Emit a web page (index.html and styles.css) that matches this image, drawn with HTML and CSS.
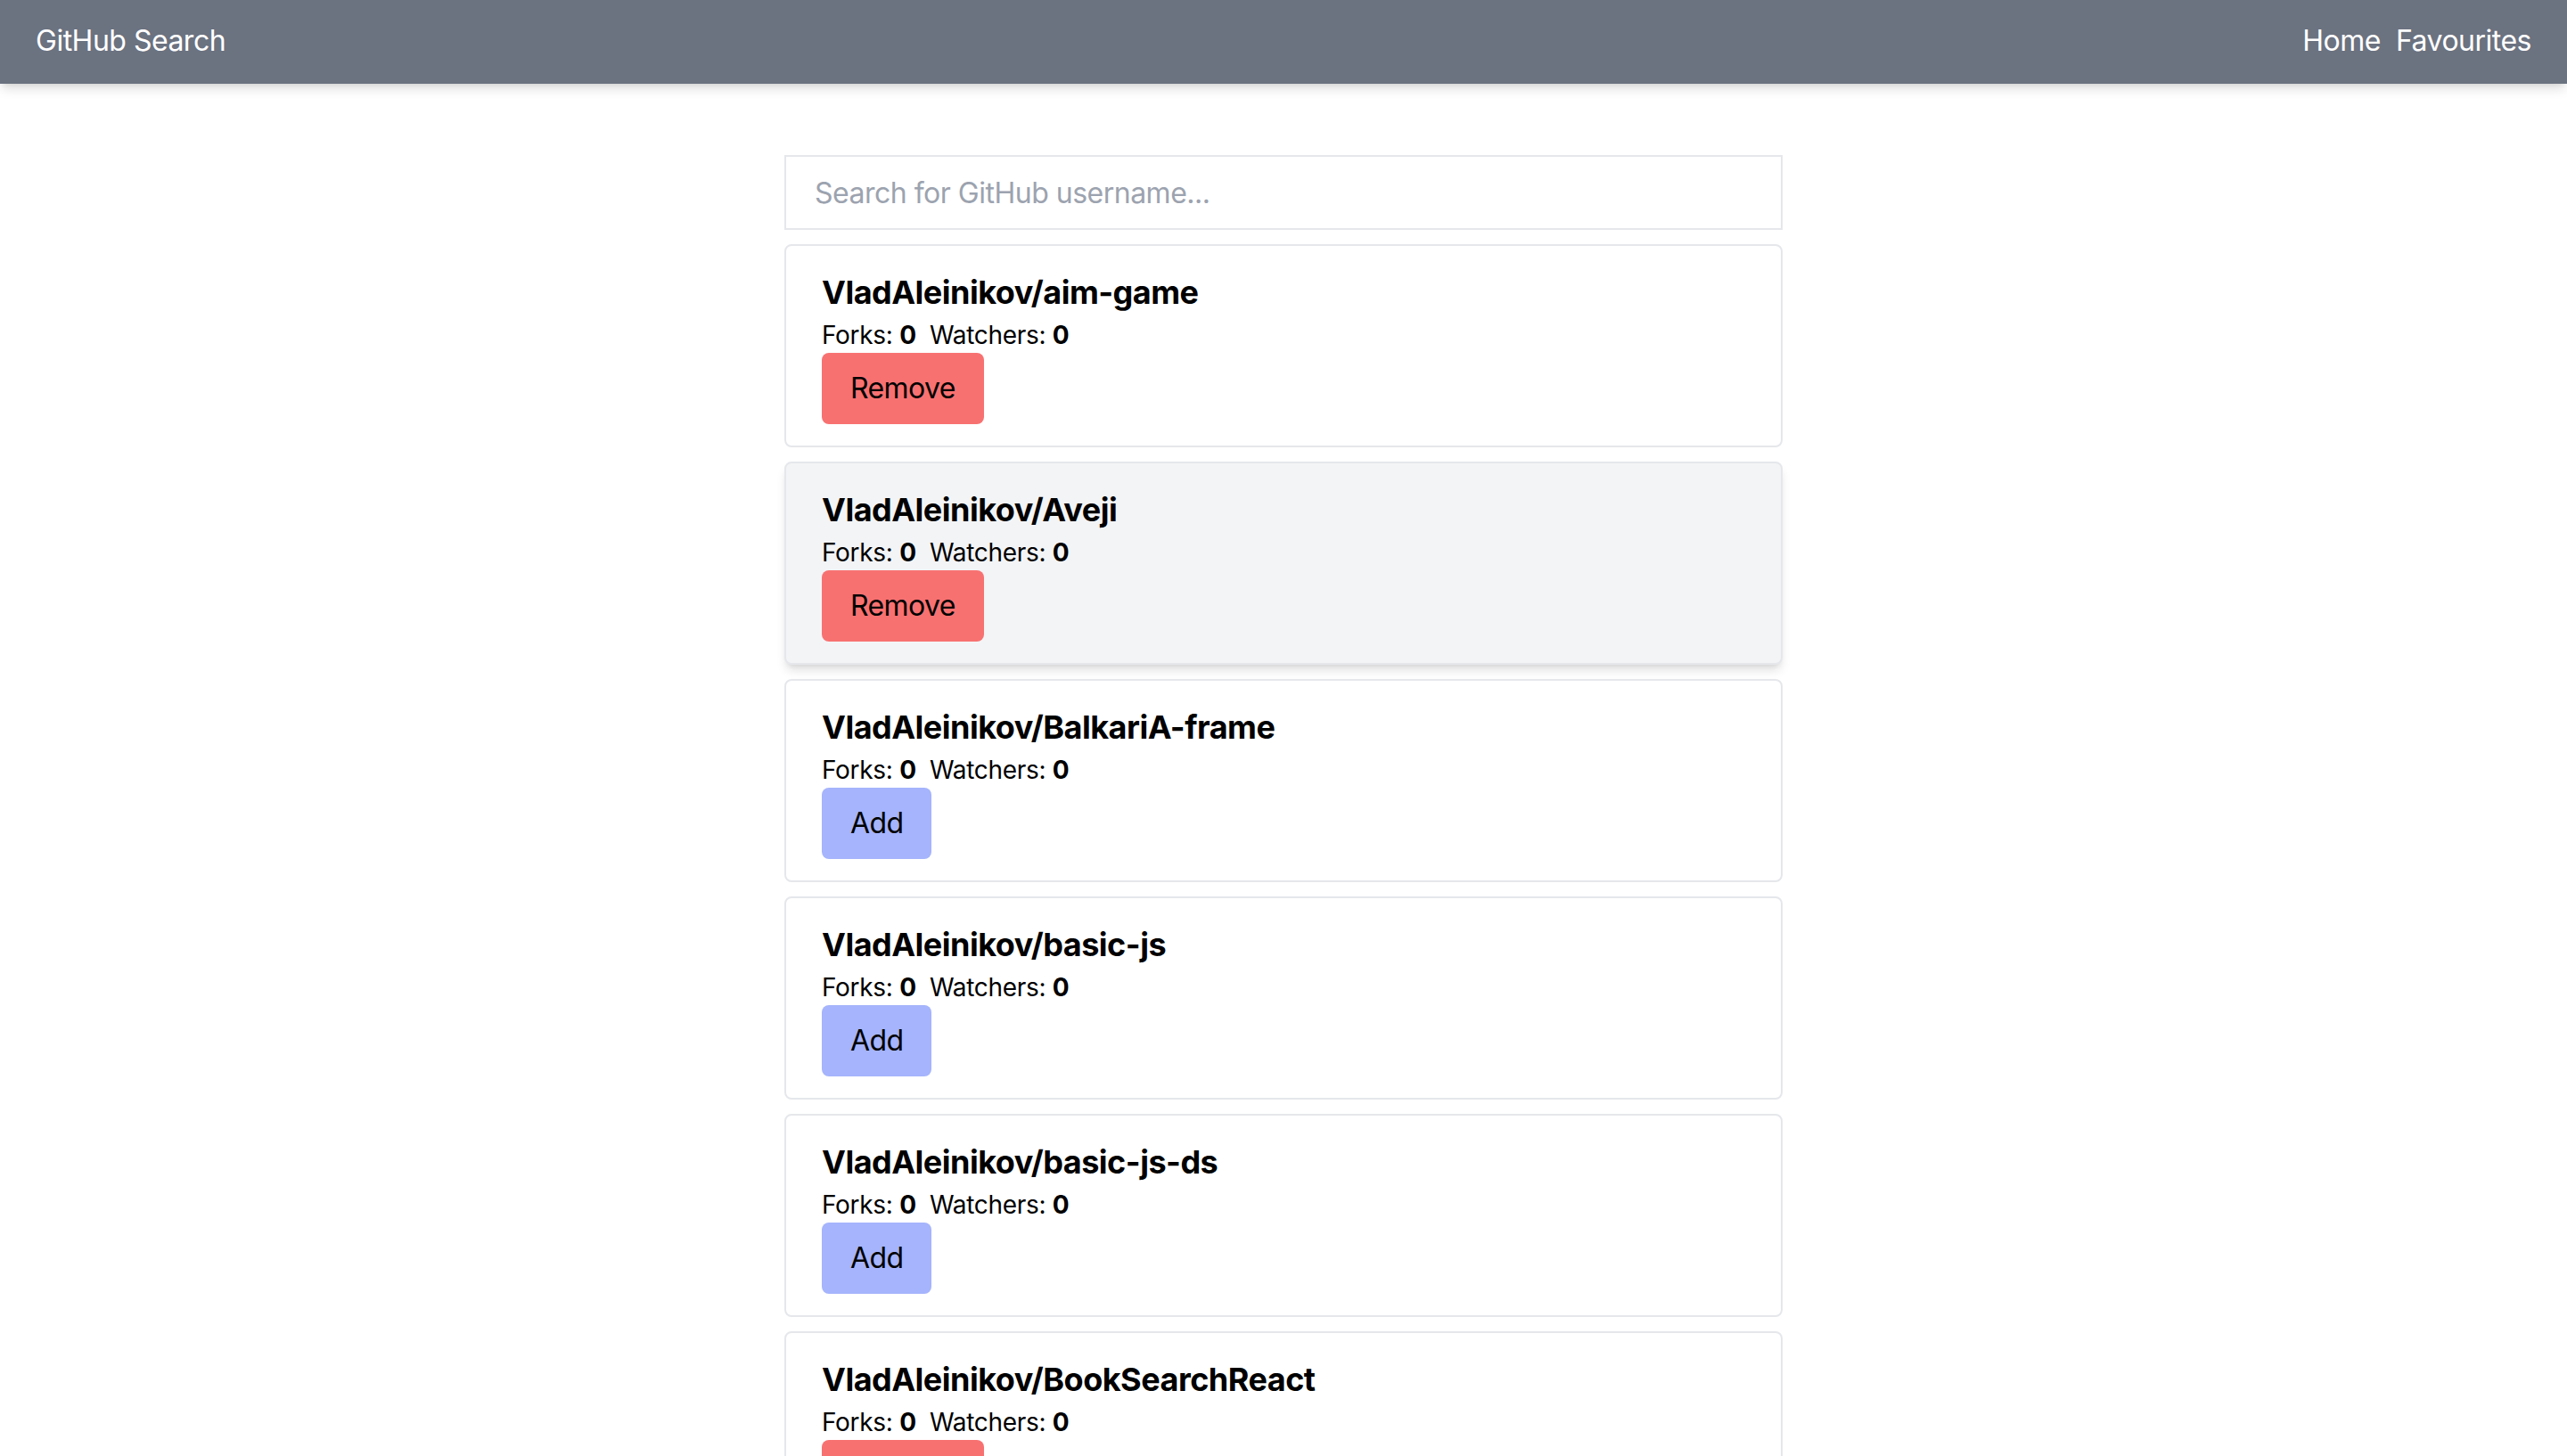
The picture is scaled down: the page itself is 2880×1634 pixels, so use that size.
FILE: index.html
```html
<!DOCTYPE html>
<html lang="en">
<head>
<meta charset="utf-8">
<title>GitHub Search</title>
<link rel="stylesheet" href="styles.css">
</head>
<body>
<nav class="navbar">
  <span class="brand">GitHub Search</span>
  <div class="links">
    <a class="link" href="#">Home</a>
    <a class="link" href="#">Favourites</a>
  </div>
</nav>
<main class="container">
  <input class="search" type="text" placeholder="Search for GitHub username...">
  <ul class="list">
    <li class="card">
      <h2 class="title">VladAleinikov/aim-game</h2>
      <p class="meta">Forks: <b>0</b> &nbsp;Watchers: <b>0</b></p>
      <button class="btn remove">Remove</button>
    </li>
    <li class="card hovered">
      <h2 class="title">VladAleinikov/Aveji</h2>
      <p class="meta">Forks: <b>0</b> &nbsp;Watchers: <b>0</b></p>
      <button class="btn remove">Remove</button>
    </li>
    <li class="card">
      <h2 class="title">VladAleinikov/BalkariA-frame</h2>
      <p class="meta">Forks: <b>0</b> &nbsp;Watchers: <b>0</b></p>
      <button class="btn add">Add</button>
    </li>
    <li class="card">
      <h2 class="title">VladAleinikov/basic-js</h2>
      <p class="meta">Forks: <b>0</b> &nbsp;Watchers: <b>0</b></p>
      <button class="btn add">Add</button>
    </li>
    <li class="card">
      <h2 class="title">VladAleinikov/basic-js-ds</h2>
      <p class="meta">Forks: <b>0</b> &nbsp;Watchers: <b>0</b></p>
      <button class="btn add">Add</button>
    </li>
    <li class="card">
      <h2 class="title">VladAleinikov/BookSearchReact</h2>
      <p class="meta">Forks: <b>0</b> &nbsp;Watchers: <b>0</b></p>
      <button class="btn remove">Remove</button>
    </li>
  </ul>
</main>
</body>
</html>
```

FILE: styles.css
```css
* { box-sizing: border-box; }

html, body {
  margin: 0;
  padding: 0;
  background: #ffffff;
  font-family: Inter, "Liberation Sans", Arial, sans-serif;
  color: #000;
}

.navbar {
  height: 94px;
  display: flex;
  align-items: center;
  justify-content: space-between;
  padding: 0 40px 3px;
  background: #6b7280;
  color: #ffffff;
  box-shadow: 0 8px 12px -2px rgba(0,0,0,0.12), 0 4px 6px -4px rgba(0,0,0,0.1);
  font-size: 32px;
  letter-spacing: -0.5px;
}

.links {
  display: flex;
  gap: 17px;
}

.link {
  color: #ffffff;
  text-decoration: none;
}

.container {
  width: 1120px;
  margin: 80px auto 0;
}

.search {
  display: block;
  width: 100%;
  height: 84px;
  margin: 0 0 16px;
  padding: 16px 32px;
  border: 2px solid #e5e7eb;
  border-radius: 0;
  font-family: inherit;
  font-size: 32px;
  line-height: 48px;
  color: #111827;
  outline: none;
  letter-spacing: -0.5px;
}

.search::placeholder {
  color: #9ca3af;
}

.list {
  list-style: none;
  margin: 0;
  padding: 0;
  display: flex;
  flex-direction: column;
  gap: 16px;
}

.card {
  border: 2px solid #e5e7eb;
  border-radius: 8px;
  padding: 24px 40px 24px;
  background: #ffffff;
}

.card.hovered {
  background: #f3f4f6;
  box-shadow: 0 8px 12px -2px rgba(0,0,0,0.12), 0 4px 6px -4px rgba(0,0,0,0.1);
}

.title {
  margin: 0;
  font-size: 36px;
  line-height: 56px;
  font-weight: 700;
  letter-spacing: -0.5px;
}

.meta {
  margin: 0;
  font-size: 28px;
  line-height: 40px;
  letter-spacing: -0.3px;
}

.meta b {
  font-weight: 700;
}

.btn {
  display: block;
  height: 80px;
  padding: 0 32px;
  border: none;
  border-radius: 8px;
  font-family: inherit;
  font-size: 32px;
  line-height: 48px;
  color: #000;
  cursor: pointer;
  letter-spacing: -0.6px;
}

.btn.remove {
  background: #f87171;
}

.btn.add {
  background: #a5b4fc;
}
```
